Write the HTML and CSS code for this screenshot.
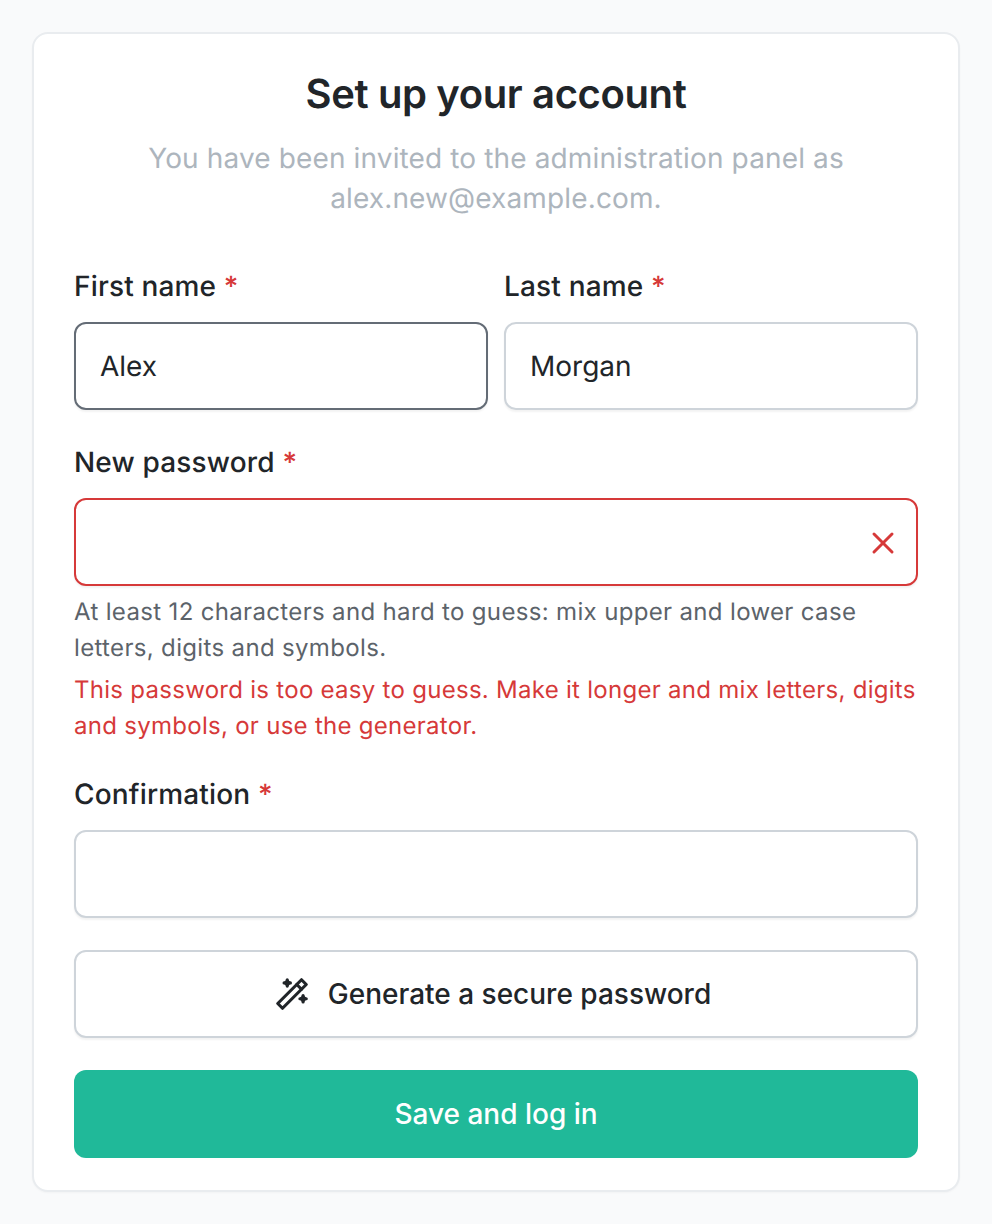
FILE: index.html
```html
<!DOCTYPE html>
<html lang="en">
<head>
<meta charset="utf-8">
<title>Set up your account</title>
<link rel="stylesheet" href="styles.css">
</head>
<body>
<main class="card">
  <h1 class="title">Set up your account</h1>
  <p class="subtitle">You have been invited to the administration panel as alex.new@example.com.</p>
  <form class="form">
    <div class="name-row">
      <div class="field">
        <label class="label">First name <span class="req">*</span></label>
        <div class="input input-focus">Alex</div>
      </div>
      <div class="field">
        <label class="label">Last name <span class="req">*</span></label>
        <div class="input">Morgan</div>
      </div>
    </div>
    <div class="field field-password">
      <label class="label">New password <span class="req">*</span></label>
      <div class="input input-error">
        <svg class="x-icon" viewBox="0 0 24 24" fill="none" stroke="currentColor" stroke-width="2" stroke-linecap="round" stroke-linejoin="round"><path d="M18 6l-12 12"/><path d="M6 6l12 12"/></svg>
      </div>
      <p class="help">At least 12 characters and hard to guess: mix upper and lower case letters, digits and symbols.</p>
      <p class="error">This password is too easy to guess. Make it longer and mix letters, digits and symbols, or use the generator.</p>
    </div>
    <div class="field">
      <label class="label">Confirmation <span class="req">*</span></label>
      <div class="input"></div>
    </div>
    <button type="button" class="btn btn-outline">
      <svg class="wand" viewBox="0 0 24 24" fill="none" stroke="currentColor" stroke-width="2" stroke-linecap="round" stroke-linejoin="round"><path d="M6 21l15 -15l-3 -3l-15 15l3 3"/><path d="M15 6l3 3"/><path d="M9 3a2 2 0 0 0 2 2a2 2 0 0 0 -2 2a2 2 0 0 0 -2 -2a2 2 0 0 0 2 -2"/><path d="M19 13a2 2 0 0 0 2 2a2 2 0 0 0 -2 2a2 2 0 0 0 -2 -2a2 2 0 0 0 2 -2"/></svg>
      Generate a secure password
    </button>
    <button type="button" class="btn btn-primary">Save and log in</button>
  </form>
</main>
</body>
</html>
```
FILE: styles.css
```css
* { box-sizing: border-box; }
html, body { margin: 0; }
body {
  background: #f9fafb;
  color: #212529;
  font-family: Inter, "Liberation Sans", sans-serif;
  text-rendering: geometricPrecision;
  padding: 32px;
  min-height: 1224px;
}
.card {
  background: #fff;
  border: 2px solid #e9ecef;
  border-radius: 16px;
  padding: 32px 40px 32px;
  height: 1160px;
  box-shadow: 0 1px 2px rgba(0,0,0,.03);
}
.title {
  margin: 0;
  font-size: 40px;
  font-weight: 600;
  letter-spacing: -0.37px;
  line-height: 56px;
  text-align: center;
}
.subtitle {
  margin: 16px auto 0;
  max-width: 720px;
  font-size: 28px;
  letter-spacing: 0.135px;
  line-height: 40px;
  color: #adb5bd;
  text-align: center;
}
.form {
  margin-top: 48px;
  display: flex;
  flex-direction: column;
}
.name-row {
  display: grid;
  grid-template-columns: 1fr 1fr;
  gap: 16px;
  margin-bottom: 32px;
}
.field { display: flex; flex-direction: column; }
.form > .field { margin-bottom: 32px; }
.form > .field-password { margin-bottom: 30px; }
.label {
  font-size: 28px;
  font-weight: 500;
  letter-spacing: 0.17px;
  line-height: 40px;
  margin-bottom: 16px;
}
.req { color: #d63939; }
.input {
  position: relative;
  height: 88px;
  border: 2px solid #ced4da;
  border-radius: 12px;
  background: #fff;
  padding: 0 24px;
  font-size: 28px;
  line-height: 84px;
  box-shadow: 0 2px 2px rgba(0,0,0,.05);
}
.input-focus { border-color: #646c76; }
.input-error { border-color: #d63939; color: #d63939; }
.x-icon {
  position: absolute;
  right: 15px;
  top: 25px;
  width: 36px;
  height: 36px;
  display: block;
}
.help, .error {
  margin: 8px 0 0;
  font-size: 24px;
  line-height: 36px;
}
.help { color: #5c636a; letter-spacing: 0.34px; }
.error { color: #d63939; margin-top: 6px; letter-spacing: 0.28px; }
.btn {
  display: flex;
  align-items: center;
  justify-content: center;
  height: 88px;
  border-radius: 12px;
  font-family: inherit;
  font-size: 28px;
  font-weight: 500;
}
.btn-outline {
  gap: 17px;
  padding: 0 8px 0 0;
  background: #fff;
  border: 2px solid #ced4da;
  color: #212529;
  margin-bottom: 32px;
  box-shadow: 0 2px 2px rgba(0,0,0,.05);
}
.btn-primary {
  background: #20b999;
  border: 0;
  color: #fff;
}
.wand { width: 38px; height: 38px; display: block; }
```
